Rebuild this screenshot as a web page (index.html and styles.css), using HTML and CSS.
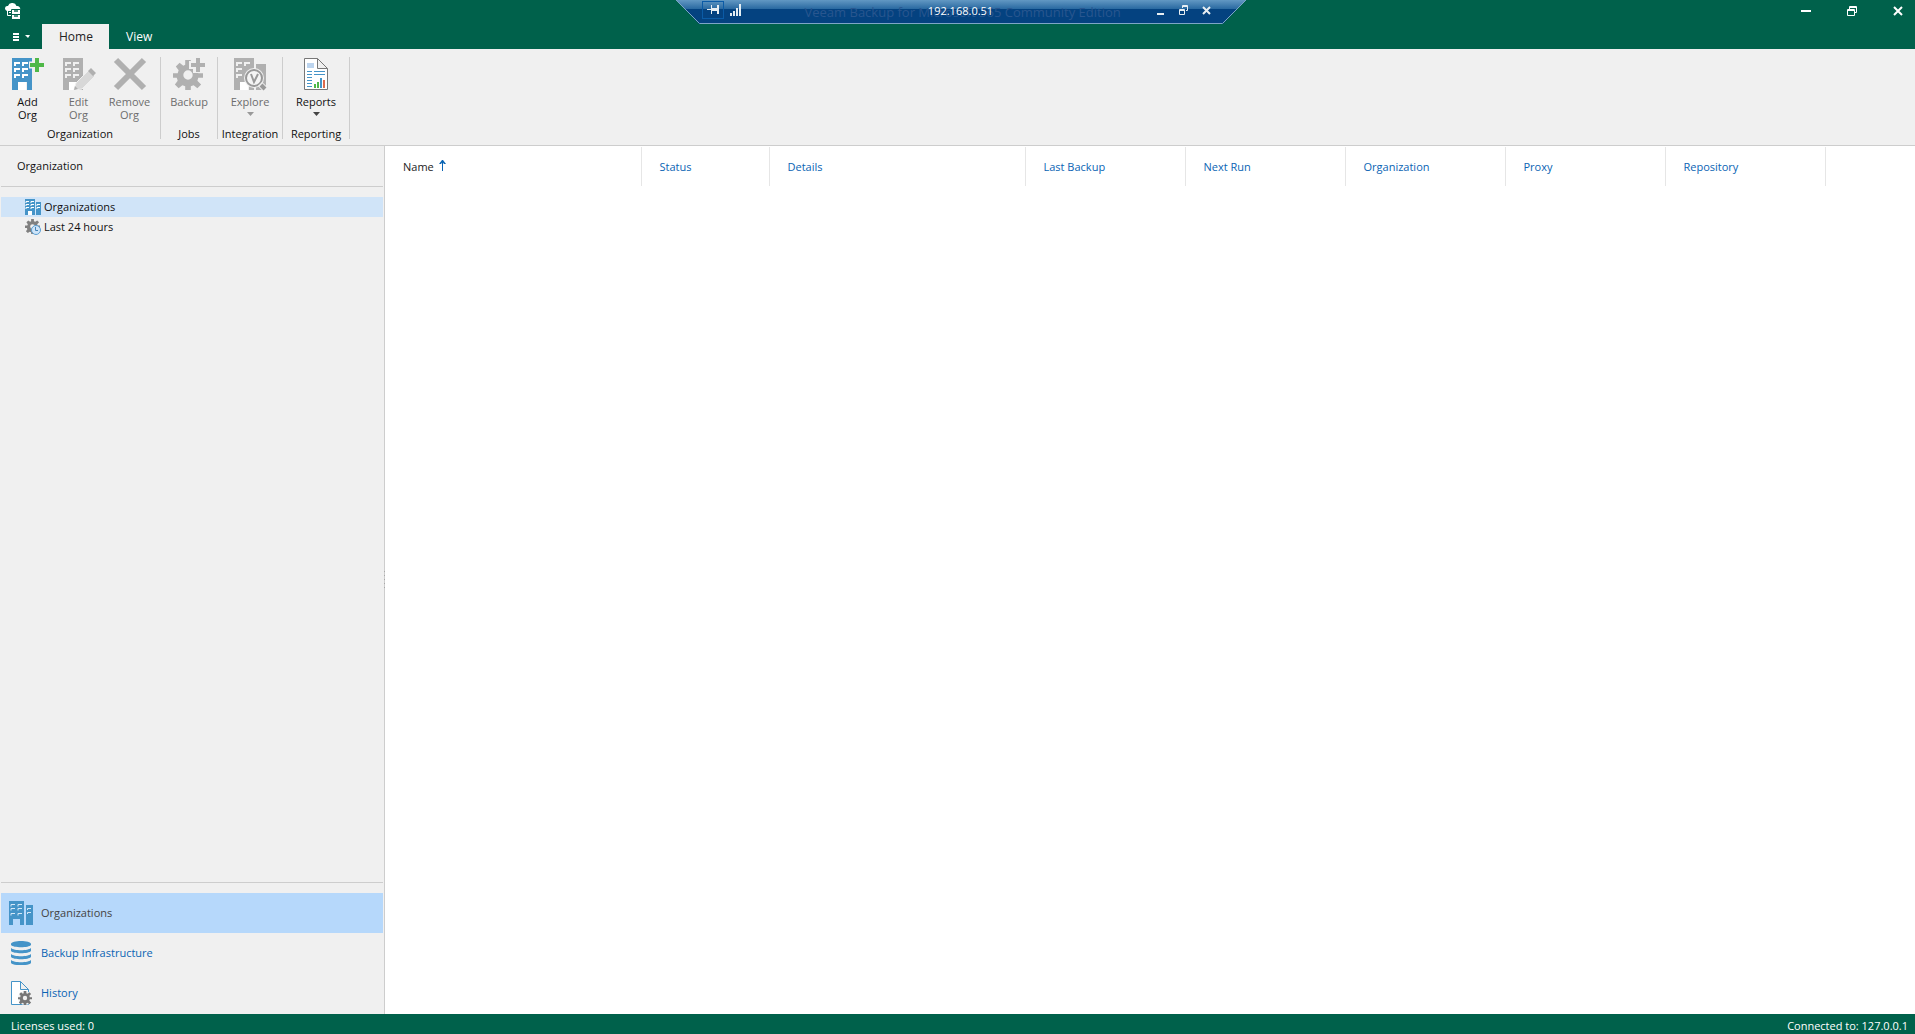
FILE: index.html
```html
<!DOCTYPE html>
<html lang="en">
<head>
<meta charset="utf-8">
<title>Veeam Backup for Microsoft 365 Community Edition</title>
<link rel="stylesheet" href="styles.css">
</head>
<body>
<svg class="defs" aria-hidden="true">
  <symbol id="gear" viewBox="0 0 32 32">
    <path fill-rule="evenodd" d="M13 0h6v5l3 1 4-3 4 4-4 4 1 3h5v5h-5l-1 3 4 4-4 4-4-3-3 1v4h-6v-4l-3-1-4 3-4-4 3-4-1-3H0v-5h5l1-3-3-4 4-4 4 3 2-1zM16 11a5 5 0 1 0 0 10a5 5 0 1 0 0-10z"/>
  </symbol>
  <symbol id="offices" viewBox="0 0 24 24">
    <path fill="#4594c8" d="M0 0h15v24h-4v-6H4v6H0zM17 4h7v20h-7z"/>
    <path fill="none" stroke="#d6e9f8" d="M2 5.500V3.500h4M9 5.500V3.500h4M2 9.500V7.500h4M9 9.500V7.500h4M2 14.500V12.500h4M9 14.500V12.500h4M18.500 9V7.500H22M18.500 13V11.500H22"/>
  </symbol>
</svg>
<div class="app">
  <header class="titlebar">
    <svg class="logo" viewBox="0 0 16 16" aria-hidden="true"><path fill="#fff" d="M2 8a3 3 0 0 1-2-3 2.500 2.500 0 0 1 3-2 4.500 4.500 0 0 1 8.500 0A3 3 0 0 1 15 7v1z"/><path fill="none" stroke="#fff" d="M2.500 8v4.500H6M4 9.500h3"/><path fill="#fff" stroke="#00614b" d="M6.500 6.500h9v5h-9zM6.500 11.500h9v5h-9z"/><path stroke="#4a917f" stroke-width="2" d="M9 8h4M9 13h4"/></svg>
    <div class="window-buttons">
      <button aria-label="Minimize"><svg width="10" height="10"><path stroke="#fff" stroke-width="2" d="M0 5h10"/></svg></button>
      <button aria-label="Restore"><svg width="10" height="10"><path fill="none" stroke="#fff" d="M2.500 3V.5h7v6H8M2 1.500h8M.5 3.500h7v6h-7zM0 4.500h8"/></svg></button>
      <button aria-label="Close"><svg width="10" height="10"><path stroke="#fff" stroke-width="2" d="M1 1l8 8M9 1L1 9"/></svg></button>
    </div>
  </header>

  <div class="remote-bar">
    <svg class="remote-shape" viewBox="0 0 570 25" preserveAspectRatio="none" aria-hidden="true">
      <defs><linearGradient id="glass" x2="0" y2="1"><stop offset="0" stop-color="#6298c3"/><stop offset=".38" stop-color="#2868a0"/><stop offset=".39" stop-color="#044280"/><stop offset="1" stop-color="#044280"/></linearGradient></defs>
      <path fill="url(#glass)" d="M0 0h570l-23 24H23z"/><path fill="none" stroke="#7da5c6" d="M0 0l23.500 23.500h523L570 0"/>
    </svg>
    <div class="remote-content">
      <button class="pin" aria-label="Pin"><svg width="12" height="9"><path fill="none" stroke="#e8eef2" d="M0 4.500h4"/><path fill="#e8eef2" d="M4 0h1v3h5V0h2v9h-2V6H5v3H4z"/></svg></button>
      <svg width="12" height="12" aria-hidden="true"><path stroke="#e4eef4" stroke-width="2" d="M1 12v-3M4 12V7M7 12V4M10 12V0"/></svg>
      <span class="product">Veeam Backup for Microsoft 365 Community Edition</span>
      <span class="address">192.168.0.51</span>
      <div class="remote-buttons">
        <button aria-label="Minimize session"><svg width="9" height="10"><path stroke="#e8eef2" stroke-width="2" d="M1 9h7"/></svg></button>
        <button aria-label="Restore session"><svg width="9" height="10"><path fill="none" stroke="#e8eef2" d="M3.500 3V.5h5v5H7M3 1.500h6M.5 4.500h5v5h-5zM0 5.500h6"/></svg></button>
        <button aria-label="Close session"><svg width="9" height="10"><path stroke="#e8eef2" stroke-width="2" d="M1 2l7 7M8 2L1 9"/></svg></button>
      </div>
    </div>
  </div>

  <nav class="tabs">
    <button class="menu" aria-label="Menu"><svg width="17" height="8"><path stroke="#fff" stroke-width="2" d="M0 1h6M0 4h6M0 7h6"/><path fill="#fff" d="M12 2h5l-2 3z"/></svg></button>
    <button class="tab active">Home</button>
    <button class="tab">View</button>
  </nav>

  <section class="ribbon" aria-label="Home">
    <div class="group organization">
      <div class="tools">
        <button><svg width="34" height="34" viewBox="0 0 34 34"><path fill="#4594c8" d="M1 1h20v32h-5v-8H7v8H1z"/><path fill="#fff" d="M7 25h8v8H7z"/><path fill="none" stroke="#fff" stroke-width="2" d="M4 9V6h5M12 9V6h5M4 15v-3h5M12 15v-3h5M4 21v-3h5M12 21v-3h5"/><path stroke="#f0f0f0" stroke-width="7" d="M18 8h14M26 1v15"/><path stroke="#4fb848" stroke-width="4" d="M19 8h14M26 1v14"/></svg><span>Add<br>Org</span></button>
        <button disabled><svg width="34" height="34" viewBox="0 0 34 34"><path fill="#b0b0b0" d="M1 1h20v32h-5v-8H7v8H1z"/><path fill="#fff" d="M7 25h8v8H7z"/><path fill="none" stroke="#f0f0f0" stroke-width="2" d="M4 9V6h5M12 9V6h5M4 15v-3h5M12 15v-3h5M4 21v-3h5M12 21v-3h5"/><path fill="#d8d8d8" stroke="#f0f0f0" d="M12 33l2-7 13-13 6 6-13 13z"/><path fill="#b0b0b0" d="M26 14l3-3 5 5-3 3zM12 33l1-4 3 3z"/></svg><span>Edit<br>Org</span></button>
        <button disabled><svg width="34" height="34" viewBox="0 0 34 34"><path stroke="#b0b0b0" stroke-width="6" d="M3 3l28 28M31 3L3 31"/></svg><span>Remove<br>Org</span></button>
      </div>
      <h2>Organization</h2>
    </div>
    <div class="group jobs">
      <div class="tools"><button disabled><svg width="34" height="34" viewBox="0 0 34 34"><use href="#gear" x="1" y="3" width="30" height="30" fill="#b0b0b0"/><path stroke="#f0f0f0" stroke-width="8" d="M17 8h16M25 0v16"/><path stroke="#b0b0b0" stroke-width="4" d="M19 8h14M26 1v14"/></svg><span>Backup</span></button></div>
      <h2>Jobs</h2>
    </div>
    <div class="group integration">
      <div class="tools"><button disabled><svg width="34" height="34" viewBox="0 0 34 34"><path fill="#b0b0b0" d="M1 1h20v32h-5v-8H7v8H1zM23 7h10v26H23z"/><path fill="none" stroke="#f0f0f0" stroke-width="2" d="M4 9V6h5M12 9V6h5M4 15v-3h5M4 21v-3h5"/><path fill="#fff" d="M7 25h8v8H7z"/><circle cx="21" cy="21" r="10" fill="#f0f0f0"/><circle cx="21" cy="21" r="8" fill="#f4f4f4" stroke="#999" stroke-width="2"/><path fill="none" stroke="#999" stroke-width="2" d="M18 17l3 8 4-8"/><path stroke="#f0f0f0" stroke-width="6" d="M27 27l6 6"/><path stroke="#999" stroke-width="4" d="M28 28l4 4"/></svg><span>Explore</span><svg class="arrow" width="7" height="4"><path fill="#999" d="M0 0h7L3.500 4z"/></svg></button></div>
      <h2>Integration</h2>
    </div>
    <div class="group reporting">
      <div class="tools"><button><svg width="34" height="34" viewBox="0 0 34 34"><path fill="#fff" stroke="#777" d="M5.500 1.500h13l10 10v21h-23zM18.500 1.500v10h10"/><path fill="#bcd4ee" d="M8 6h7v5H8z"/><path stroke="#4594c8" d="M8 14.500h5M8 17.500h5M8 20.500h5M8 23.500h5M8 26.500h5M8 29.500h5M15 14.500h11M15 17.500h11"/><path stroke="#4fb848" stroke-width="2" d="M16 31v-4M19 31v-6"/><path stroke="#4594c8" stroke-width="2" d="M22 31V21"/><path stroke="#df6a4b" stroke-width="2" d="M25 31v-8"/></svg><span>Reports</span><svg class="arrow" width="7" height="4"><path fill="#444" d="M0 0h7L3.500 4z"/></svg></button></div>
      <h2>Reporting</h2>
    </div>
  </section>

  <div class="workspace">
    <aside class="sidebar">
      <h1>Organization</h1>
      <div class="tree">
        <a href="#organizations" class="selected"><svg width="16" height="16"><path fill="#4594c8" d="M0 0h10v16H7v-4H3v4H0zM11 3h5v13h-5z"/><path fill="#fff" d="M3 12h4v4H3z"/><path fill="none" stroke="#fff" d="M1 4V2.500h3M6 4V2.500h3M1 7V5.500h3M6 7V5.500h3M1 10V8.500h3M6 10V8.500h3M12 7V5.500h3M12 10V8.500h3"/></svg>Organizations</a>
        <a href="#last-24"><svg width="16" height="16"><use href="#gear" width="15" height="15" fill="#808080"/><circle cx="11" cy="11" r="4.500" fill="#cfe4f7" stroke="#5a9fd4"/><path fill="none" stroke="#4283b8" d="M10.500 8v3.500H13"/></svg>Last 24 hours</a>
      </div>
      <svg class="grip" width="1" height="17" aria-hidden="true"><path stroke="#a8a8a8" stroke-width="2" stroke-dasharray="1 3" d="M0 0v17"/></svg>
      <nav class="sections">
        <a href="#organizations" class="current"><svg width="24" height="24"><use href="#offices"/></svg>Organizations</a>
        <a href="#infrastructure"><svg width="24" height="24"><path fill="#4594c8" d="M2 3c0-4 20-4 20 0v1c-2 3-18 3-20 0zM2 7c3 3 17 3 20 0v3c-2 3-18 3-20 0zM2 13c3 3 17 3 20 0v3c-2 3-18 3-20 0zM2 19c3 3 17 3 20 0v3c-2 3-18 3-20 0z"/></svg>Backup Infrastructure</a>
        <a href="#history"><svg width="24" height="24"><path fill="#fff" stroke="#4594c8" d="M2.500.5h9l8 8v15h-17zM11.500.5v8h8"/><circle cx="16" cy="17" r="7" fill="#f0f0f0"/><use href="#gear" x="9" y="10" width="14" height="14" fill="#777"/></svg>History</a>
      </nav>
    </aside>
    <main>
      <table>
        <colgroup><col class="wide"><col class="narrow"><col class="wide"><col class="medium"><col class="medium"><col class="medium"><col class="medium"><col class="medium"><col></colgroup>
        <thead><tr>
          <th class="sorted" aria-sort="ascending">Name <svg width="7" height="11" aria-hidden="true"><path stroke="#0a64b4" d="M3.500 11V1"/><path fill="#0a64b4" d="M0 4l3-4h1l3 4H5L3.500 2 2 4z"/></svg></th>
          <th>Status</th><th>Details</th><th>Last Backup</th><th>Next Run</th><th>Organization</th><th>Proxy</th><th>Repository</th><td></td>
        </tr></thead>
      </table>
    </main>
  </div>
  <footer><span>Licenses used: 0</span><span>Connected to: 127.0.0.1</span></footer>
</div>
</body>
</html>
```

FILE: styles.css
```css
* { box-sizing: border-box; }
body {
  margin: 0;
  background: #fff;
  color: #111;
  font: 11px/16px "Open Sans", "Noto Sans", sans-serif;
}
button {
  padding: 0;
  border: 0;
  background: none;
  color: inherit;
  font: inherit;
}
a { color: inherit; text-decoration: none; }
h1, h2 { margin: 0; font: inherit; }
svg { display: block; flex: none; }
.defs { position: absolute; width: 0; height: 0; }

.app {
  display: flex;
  flex-direction: column;
  min-height: 100vh;
}
.titlebar {
  display: flex;
  justify-content: space-between;
  height: 24px;
  padding-left: 5px;
  background: #00614b;
}
.logo { width: 16px; height: 16px; margin-top: 3px; }
.window-buttons {
  display: flex;
  align-items: center;
  gap: 36px;
  height: 22px;
  padding-right: 12px;
}

.remote-bar {
  position: absolute;
  top: 0;
  left: 50%;
  width: 570px;
  height: 25px;
  margin-left: -282px;
  color: #fff;
}
.remote-shape { position: absolute; width: 100%; height: 100%; }
.remote-content {
  position: relative;
  display: flex;
  align-items: center;
  height: 19px;
  padding: 0 35px 0 26px;
}
.pin {
  display: grid;
  place-items: center;
  width: 22px;
  height: 18px;
  margin-right: 6px;
  border: 1px solid #0b5ba6;
}
.product {
  position: absolute;
  top: 4px;
  left: 129px;
  color: #28568f;
  font-size: 13px;
  white-space: nowrap;
}
.address {
  position: absolute;
  top: 3px;
  left: 0;
  width: 100%;
  text-align: center;
}
.remote-buttons {
  position: relative;
  display: flex;
  gap: 14px;
  margin-left: auto;
}

.tabs {
  display: flex;
  height: 25px;
  background: #00614b;
  color: #fff;
  font-size: 12px;
}
.menu { display: grid; place-items: center; width: 42px; }
.tab { padding: 0 17px; }
.tab.active { width: 67px; background: #f0f0f0; color: #222; }

.ribbon {
  display: flex;
  height: 97px;
  padding: 8px 0 6px;
  border-bottom: 1px solid #cdcdcd;
  background: #f0f0f0;
}
.group {
  display: flex;
  flex-direction: column;
  align-items: center;
  justify-content: space-between;
  border-right: 1px solid #cdcdcd;
}
.organization { width: 161px; }
.organization .tools { align-self: flex-start; padding-left: 2px; }
.jobs { width: 57px; }
.integration { width: 65px; }
.reporting { width: 67px; }
.tools { display: flex; }
.tools button {
  display: flex;
  flex-direction: column;
  align-items: center;
  min-width: 51px;
  line-height: 13px;
}
.tools span { margin-top: 4px; }
.tools button:disabled { color: #6d6d6d; }
.arrow { margin-top: 4px; }
.group h2 { line-height: 10px; white-space: nowrap; }

.workspace { display: flex; flex: 1; }
.sidebar {
  position: relative;
  display: flex;
  flex-direction: column;
  width: 385px;
  padding: 0 1px 1px;
  border-right: 1px solid #cdcdcd;
  background: #f0f0f0;
}
.grip { position: absolute; top: 49%; right: -1px; }
.sidebar h1 {
  padding: 12px 16px;
  border-bottom: 1px solid #cdcdcd;
}
.tree { padding-top: 10px; }
.tree a {
  display: flex;
  align-items: center;
  gap: 3px;
  height: 20px;
  padding-left: 24px;
}
.tree .selected { background: #d0e4f8; }
.sections {
  margin-top: auto;
  padding-top: 10px;
  border-top: 1px solid #cdcdcd;
}
.sections a {
  display: flex;
  align-items: center;
  gap: 8px;
  height: 40px;
  padding-left: 8px;
  color: #0a64b4;
}
.sections .current { background: #b6d8fb; color: #444; }

main { flex: 1; padding-top: 1px; }
table { width: 100%; border-collapse: collapse; table-layout: fixed; }
.wide { width: 256px; }
.narrow { width: 128px; }
.medium { width: 160px; }
th {
  height: 39px;
  padding: 0 18px;
  border-right: 1px solid #e6e6e6;
  color: #0a64b4;
  font-weight: 400;
  text-align: left;
}
.sorted { color: #222; }
th svg { display: inline-block; margin-left: 2px; }

footer {
  display: flex;
  align-items: center;
  justify-content: space-between;
  height: 20px;
  padding: 3px 7px 0 11px;
  background: #00614b;
  color: #fff;
}
```
